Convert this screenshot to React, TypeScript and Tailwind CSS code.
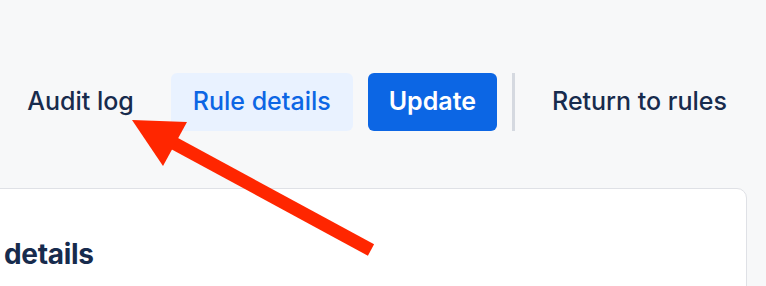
export default function App() {
  return (
    <div
      className="relative h-[286px] w-[766px] overflow-hidden bg-[#f7f8f9] text-[#172b4d]"
      style={{ fontFamily: 'Inter, "Noto Sans", sans-serif' }}
    >
      {/* Toolbar */}
      <div className="flex items-center justify-end gap-[15px] pr-[17px] pt-[73px]">
        <button className="flex h-[58px] items-center rounded-[6px] px-[22px] text-[25px] font-medium text-[#172b4d]">
          Audit log
        </button>
        <button className="flex h-[58px] items-center rounded-[6px] bg-[#e9f2ff] px-[22px] text-[25px] font-medium text-[#0c66e4]">
          Rule details
        </button>
        <button className="flex h-[58px] items-center rounded-[6px] bg-[#0c66e4] px-[21px] text-[25px] font-semibold text-white">
          Update
        </button>
        <div className="h-[58px] w-[3px] bg-[#d5d9e0]" />
        <button className="flex h-[58px] items-center rounded-[6px] px-[22px] text-[25px] font-medium text-[#172b4d]">
          Return to rules
        </button>
      </div>

      {/* Card */}
      <div className="mr-[19px] ml-[-40px] mt-[57px] h-[200px] rounded-[10px] border border-[#dfe1e6] bg-white pl-[43px] pt-[44px]">
        <h2 className="text-[28px] font-bold tracking-[-0.3px] text-[#172b4d]">details</h2>
      </div>

      {/* Annotation arrow */}
      <svg className="pointer-events-none absolute left-0 top-0" width="766" height="286" viewBox="0 0 766 286">
        <line x1="168" y1="140" x2="371" y2="250" stroke="#ff2600" strokeWidth="13" />
        <polygon points="132,120 187,122 163,166" fill="#ff2600" />
      </svg>
    </div>
  )
}
